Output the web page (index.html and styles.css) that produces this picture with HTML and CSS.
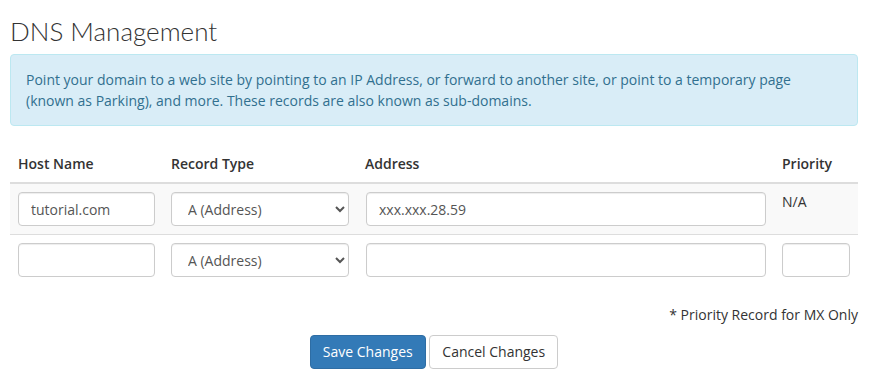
FILE: index.html
```html
<!DOCTYPE html>
<html lang="en">
<head>
    <meta charset="UTF-8">
    <title>DNS Management</title>
    <link rel="stylesheet" href="styles.css">
</head>
<body>
    <div class="main">
        <h1 class="page-title">DNS Management</h1>

        <div class="alert-info">
            Point your domain to a web site by pointing to an IP Address, or forward to another site, or point to a temporary page (known as Parking), and more. These records are also known as sub-domains.
        </div>

        <form>
            <table class="dns-table">
                <thead>
                    <tr>
                        <th>Host Name</th>
                        <th>Record Type</th>
                        <th>Address</th>
                        <th>Priority</th>
                    </tr>
                </thead>
                <tbody>
                    <tr class="striped">
                        <td><input type="text" class="field host" value="tutorial.com"></td>
                        <td>
                            <select class="field type">
                                <option>A (Address)</option>
                                <option>AAAA (Address)</option>
                                <option>MXE (Mail Easy)</option>
                                <option>MX (Mail)</option>
                                <option>CNAME (Alias)</option>
                                <option>TXT (SPF)</option>
                                <option>URL Redirect</option>
                                <option>URL Frame</option>
                            </select>
                        </td>
                        <td><input type="text" class="field address" value="xxx.xxx.28.59"></td>
                        <td class="na">N/A</td>
                    </tr>
                    <tr>
                        <td><input type="text" class="field host"></td>
                        <td>
                            <select class="field type">
                                <option>A (Address)</option>
                                <option>AAAA (Address)</option>
                                <option>MXE (Mail Easy)</option>
                                <option>MX (Mail)</option>
                                <option>CNAME (Alias)</option>
                                <option>TXT (SPF)</option>
                                <option>URL Redirect</option>
                                <option>URL Frame</option>
                            </select>
                        </td>
                        <td><input type="text" class="field address"></td>
                        <td><input type="text" class="field priority"></td>
                    </tr>
                </tbody>
            </table>

            <p class="note">* Priority Record for MX Only</p>

            <div class="actions">
                <button type="submit" class="btn btn-primary">Save Changes</button>
                <button type="reset" class="btn btn-default">Cancel Changes</button>
            </div>
        </form>
    </div>
</body>
</html>
```

FILE: styles.css
```css
body {
    margin: 0;
    font-family: "Open Sans", sans-serif;
    font-size: 14px;
    line-height: 20px;
    color: #333;
    background: #fff;
}

.main {
    width: 848px;
    padding: 0 10px;
}

.page-title {
    font-family: Lato, "Open Sans", sans-serif;
    font-weight: 300;
    font-size: 26px;
    line-height: 30px;
    margin: 16px 0 0 0;
    color: #333;
}

.alert-info {
    margin-top: 8px;
    padding: 14px 15px;
    background: #d9edf7;
    border: 1px solid #bce8f1;
    border-radius: 4px;
    color: #31708f;
    line-height: 21px;
}

.dns-table {
    width: 100%;
    margin-top: 20px;
    border-collapse: collapse;
    border-spacing: 0;
}

.dns-table th {
    text-align: left;
    font-weight: 600;
    padding: 8px;
    border-bottom: 2px solid #ddd;
}

.dns-table td {
    padding: 8px;
    vertical-align: top;
}

.dns-table .striped td {
    background: #f9f9f9;
    border-bottom: 1px solid #ddd;
}

.field {
    box-sizing: border-box;
    height: 34px;
    padding: 6px 12px;
    font-family: "Open Sans", sans-serif;
    font-size: 14px;
    color: #555;
    background: #fff;
    border: 1px solid #ccc;
    border-radius: 4px;
    box-shadow: inset 0 1px 1px rgba(0, 0, 0, 0.075);
    display: block;
}

.host {
    width: 137px;
}

.type {
    width: 178px;
    padding: 6px 8px 6px 12px;
}

.address {
    width: 400px;
    margin-left: 1px;
}

.priority {
    width: 68px;
}

.note {
    text-align: right;
    margin: 20px 0 0 0;
}

.actions {
    text-align: center;
    margin-top: 10px;
}

.btn {
    font-family: "Open Sans", sans-serif;
    font-size: 14px;
    line-height: 20px;
    padding: 6px 12px;
    border-radius: 4px;
    border: 1px solid transparent;
    cursor: pointer;
}

.btn-primary {
    background: #337ab7;
    border-color: #2e6da4;
    color: #fff;
}

.btn-default {
    background: #fff;
    border-color: #ccc;
    color: #333;
}
```
